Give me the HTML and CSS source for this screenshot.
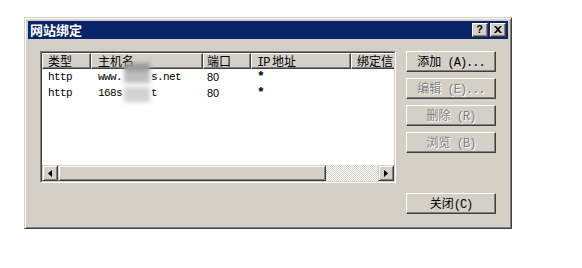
FILE: index.html
```html
<!DOCTYPE html>
<html>
<head>
<meta charset="utf-8">
<link rel="stylesheet" href="styles.css">
</head>
<body>
<div class="page">
  <div class="dialog">
    <div class="titlebar">
      <span class="title">网站绑定</span>
      <div class="tbtns">
        <div class="tbtn"><span class="q">?</span></div>
        <div class="tbtn">
          <svg width="8" height="7" viewBox="0 0 8 7"><path d="M0 0h2l2 2 2-2h2L5 3.5 8 7H6L4 5 2 7H0l3-3.5z" fill="#000"/></svg>
        </div>
      </div>
    </div>
    <div class="client">
      <div class="listview">
        <div class="lv-inner">
          <div class="header">
            <div class="hcell c1">类型</div>
            <div class="hcell c2">主机名</div>
            <div class="hcell c3">端口</div>
            <div class="hcell c4"><span class="hmono">IP</span> 地址</div>
            <div class="hcell c5">绑定信</div>
          </div>
          <div class="rows">
            <div class="row">
              <div class="cell c1 mono">http</div>
              <div class="cell c2 mono">www.<span class="gap"></span>s.net</div>
              <div class="cell c3 sans">80</div>
              <div class="cell c4 mono star">*</div>
            </div>
            <div class="row">
              <div class="cell c1 mono">http</div>
              <div class="cell c2 mono">168s<span class="gap"></span>t</div>
              <div class="cell c3 sans">80</div>
              <div class="cell c4 mono star">*</div>
            </div>
            <div class="blur b1"></div>
            <div class="blur b2"></div>
          </div>
          <div class="hscroll">
            <div class="sbtn"><svg width="4" height="7" viewBox="0 0 4 7"><path d="M4 0v7L0 3.5z" fill="#000"/></svg></div>
            <div class="thumb"></div>
            <div class="track"></div>
            <div class="sbtn"><svg width="4" height="7" viewBox="0 0 4 7"><path d="M0 0v7l4-3.5z" fill="#000"/></svg></div>
          </div>
        </div>
      </div>
      <div class="buttons">
        <div class="btn">添加<span class="bmono"> (A)...</span></div>
        <div class="btn disabled">编辑<span class="bmono"> (E)...</span></div>
        <div class="btn disabled">删除<span class="bmono"> (R)</span></div>
        <div class="btn disabled">浏览<span class="bmono"> (B)</span></div>
        <div class="btn close">关闭<span class="bmono">(C)</span></div>
      </div>
    </div>
  </div>
</div>
</body>
</html>
```
FILE: styles.css
```css
html, body {
  margin: 0;
  padding: 0;
  background: #ffffff;
}
.page {
  padding: 17px 0 0 24px;
}
.dialog {
  width: 488px;
  height: 212px;
  box-sizing: border-box;
  background: #d4d0c8;
  border: 1px solid;
  border-color: #d4d0c8 #404040 #404040 #d4d0c8;
  box-shadow: inset 1px 1px #ffffff, inset -1px -1px #808080;
  padding: 3px;
  font-family: "Noto Sans CJK SC", sans-serif;
  font-size: 12px;
  color: #000;
}
.titlebar {
  height: 18px;
  background: #0a246a;
  display: flex;
  align-items: center;
  justify-content: space-between;
  padding: 0 2px 0 2px;
}
.title {
  color: #fff;
  font-weight: bold;
  font-size: 13px;
  line-height: 18px;
}
.tbtns {
  display: flex;
  gap: 2px;
}
.tbtn {
  width: 16px;
  height: 14px;
  box-sizing: border-box;
  background: #d4d0c8;
  border: 1px solid;
  border-color: #ffffff #404040 #404040 #ffffff;
  box-shadow: inset -1px -1px #808080;
  display: flex;
  align-items: center;
  justify-content: center;
}
.tbtn svg { margin-left: -1px; margin-top: -1px; }
.q {
  font-family: "Liberation Sans", sans-serif;
  font-weight: bold;
  font-size: 11px;
  line-height: 11px;
  margin-left: -1px;
  margin-top: -1px;
}
.client {
  display: flex;
  padding: 12px 12px 0 12px;
  gap: 10px;
}
.listview {
  width: 356px;
  height: 132px;
  flex: none;
  box-sizing: border-box;
  border: 1px solid;
  border-color: #808080 #ffffff #ffffff #808080;
}
.lv-inner {
  height: 100%;
  box-sizing: border-box;
  border: 1px solid;
  border-color: #404040 #d4d0c8 #d4d0c8 #404040;
  background: #fff;
  display: flex;
  flex-direction: column;
  overflow: hidden;
}
.header {
  display: flex;
  height: 16px;
  flex: none;
}
.hcell {
  flex: none;
  box-sizing: border-box;
  height: 16px;
  background: #d4d0c8;
  border-top: 1px solid #ffffff;
  border-left: 1px solid #ffffff;
  border-right: 1px solid #404040;
  border-bottom: 1px solid #404040;
  box-shadow: inset -1px -1px #808080;
  line-height: 14px;
  white-space: nowrap;
  overflow: hidden;
}
.hmono {
  font-family: "Liberation Mono", monospace;
  font-size: 12px;
  letter-spacing: -1px;
}
.c1 { width: 49px; padding-left: 5px; }
.c2 { width: 112px; padding-left: 6px; }
.c3 { width: 48px; padding-left: 3px; }
.c4 { width: 100px; padding-left: 5px; }
.c5 { width: 45px; padding-left: 5px; }
.rows {
  flex: 1;
  position: relative;
}
.row {
  display: flex;
  height: 16px;
  line-height: 16px;
}
.cell {
  flex: none;
  box-sizing: border-box;
  white-space: nowrap;
}
.row .c1 { padding-left: 6px; }
.row .c2 { padding-left: 7px; }
.row .c3 { padding-left: 4px; }
.row .c4 { padding-left: 6px; }
.mono {
  font-family: "Liberation Mono", monospace;
  font-size: 11px;
  letter-spacing: -0.6px;
}
.star {
  font-size: 13px;
  font-weight: bold;
}
.sans {
  font-family: "Liberation Sans", sans-serif;
  font-size: 11px;
}
.gap {
  display: inline-block;
  width: 29px;
}
.blur {
  position: absolute;
  filter: blur(2px);
}
.b1 { left: 82px; top: -6px; width: 26px; height: 20px; background: linear-gradient(#9a9a9a 0 40%, #bdbdbd 40% 100%); }
.b2 { left: 82px; top: 18px; width: 26px; height: 15px; background: #d2d2d2; }
.hscroll {
  display: flex;
  height: 16px;
  flex: none;
}
.sbtn, .thumb {
  box-sizing: border-box;
  background: #d4d0c8;
  border: 1px solid;
  border-color: #d4d0c8 #404040 #404040 #d4d0c8;
  box-shadow: inset 1px 1px #ffffff, inset -1px -1px #808080;
}
.sbtn {
  flex: none;
  width: 16px;
  height: 16px;
  display: flex;
  align-items: center;
  justify-content: center;
}
.thumb {
  flex: none;
  width: 268px;
  height: 16px;
}
.track {
  flex: 1;
  height: 16px;
  background-color: #ffffff;
  background-image:
    linear-gradient(45deg, #d4d0c8 25%, transparent 25%, transparent 75%, #d4d0c8 75%),
    linear-gradient(45deg, #d4d0c8 25%, transparent 25%, transparent 75%, #d4d0c8 75%);
  background-size: 2px 2px;
  background-position: 0 0, 1px 1px;
}
.buttons {
  display: flex;
  flex-direction: column;
  gap: 6px;
  width: 90px;
}
.btn {
  width: 90px;
  height: 21px;
  box-sizing: border-box;
  border: 1px solid;
  border-color: #ffffff #404040 #404040 #ffffff;
  box-shadow: inset -1px -1px #808080;
  background: #d4d0c8;
  text-align: center;
  line-height: 18px;
  font-size: 12px;
  white-space: pre;
}
.bmono {
  font-family: "Liberation Mono", monospace;
  font-size: 12px;
  letter-spacing: -1px;
}
.disabled {
  color: #808080;
  text-shadow: 1px 1px #ffffff;
}
.close {
  margin-top: 34px;
}
```
